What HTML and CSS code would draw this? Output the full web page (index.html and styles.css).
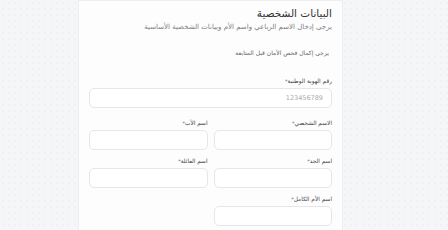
FILE: index.html
```html
<!DOCTYPE html>
<html lang="ar" dir="rtl">
<head>
    <meta charset="UTF-8">
    <title>البيانات الشخصية</title>
    <link rel="stylesheet" href="styles.css">
</head>
<body>
    <div class="card">
        <h1 class="title">البيانات الشخصية</h1>
        <p class="sub">يرجى إدخال الاسم الرباعي واسم الأم وبيانات الشخصية الأساسية</p>
        <div class="captcha">يرجى إكمال فحص الأمان قبل المتابعة</div>

        <div class="field first">
            <label>رقم الهوية الوطنية<span>*</span></label>
            <input type="text" placeholder="123456789">
        </div>

        <div class="row">
            <div class="field">
                <label>الاسم الشخصي<span>*</span></label>
                <input type="text">
            </div>
            <div class="field">
                <label>اسم الأب<span>*</span></label>
                <input type="text">
            </div>
        </div>
        <div class="row">
            <div class="field">
                <label>اسم الجد<span>*</span></label>
                <input type="text">
            </div>
            <div class="field">
                <label>اسم العائلة<span>*</span></label>
                <input type="text">
            </div>
        </div>
        <div class="row">
            <div class="field">
                <label>اسم الأم الكامل<span>*</span></label>
                <input type="text">
            </div>
        </div>
    </div>
</body>
</html>
```

FILE: styles.css
```css
*{
    margin:0;
    padding:0;
    box-sizing:border-box;
}
body{
    background-color:#f5f6f8;
    background-image:radial-gradient(#e9ebef 0.6px, transparent 0.8px);
    background-size:6px 6px;
    font-family:"DejaVu Sans", sans-serif;
    color:#333;
    height:230px;
    overflow:hidden;
}
.card{
    width:265px;
    margin-right:105px;
    background:#fdfdfd;
    border:1px solid #eceef1;
    border-bottom:none;
    padding:3px 10px 0 10px;
    height:240px;
}
.title{
    font-size:10.5px;
    line-height:18px;
    font-weight:normal;
    color:#333;
}
.sub{
    font-size:7px;
    line-height:10px;
    color:#808080;
}
.captcha{
    font-size:6px;
    line-height:10px;
    color:#666;
    margin-top:16px;
    padding-right:3px;
}
.field{
    display:flex;
    flex-direction:column;
}
.field.first{
    margin-top:19px;
    margin-bottom:11px;
}
.field label{
    font-size:5.8px;
    line-height:9px;
    color:#444;
    margin-bottom:2px;
}
.field label span{
    font-size:5px;
    vertical-align:top;
    color:#666;
}
.field input{
    height:20px;
    border:1px solid #e4e6ea;
    border-radius:5px;
    background:#fff;
    font-family:"DejaVu Sans", sans-serif;
    font-size:6.5px;
    padding:0 8px;
    direction:rtl;
    outline:none;
}
.field input::placeholder{
    color:#aaa;
}
.row{
    display:grid;
    grid-template-columns:1fr 1fr;
    gap:6px;
    margin-bottom:7px;
}
```
